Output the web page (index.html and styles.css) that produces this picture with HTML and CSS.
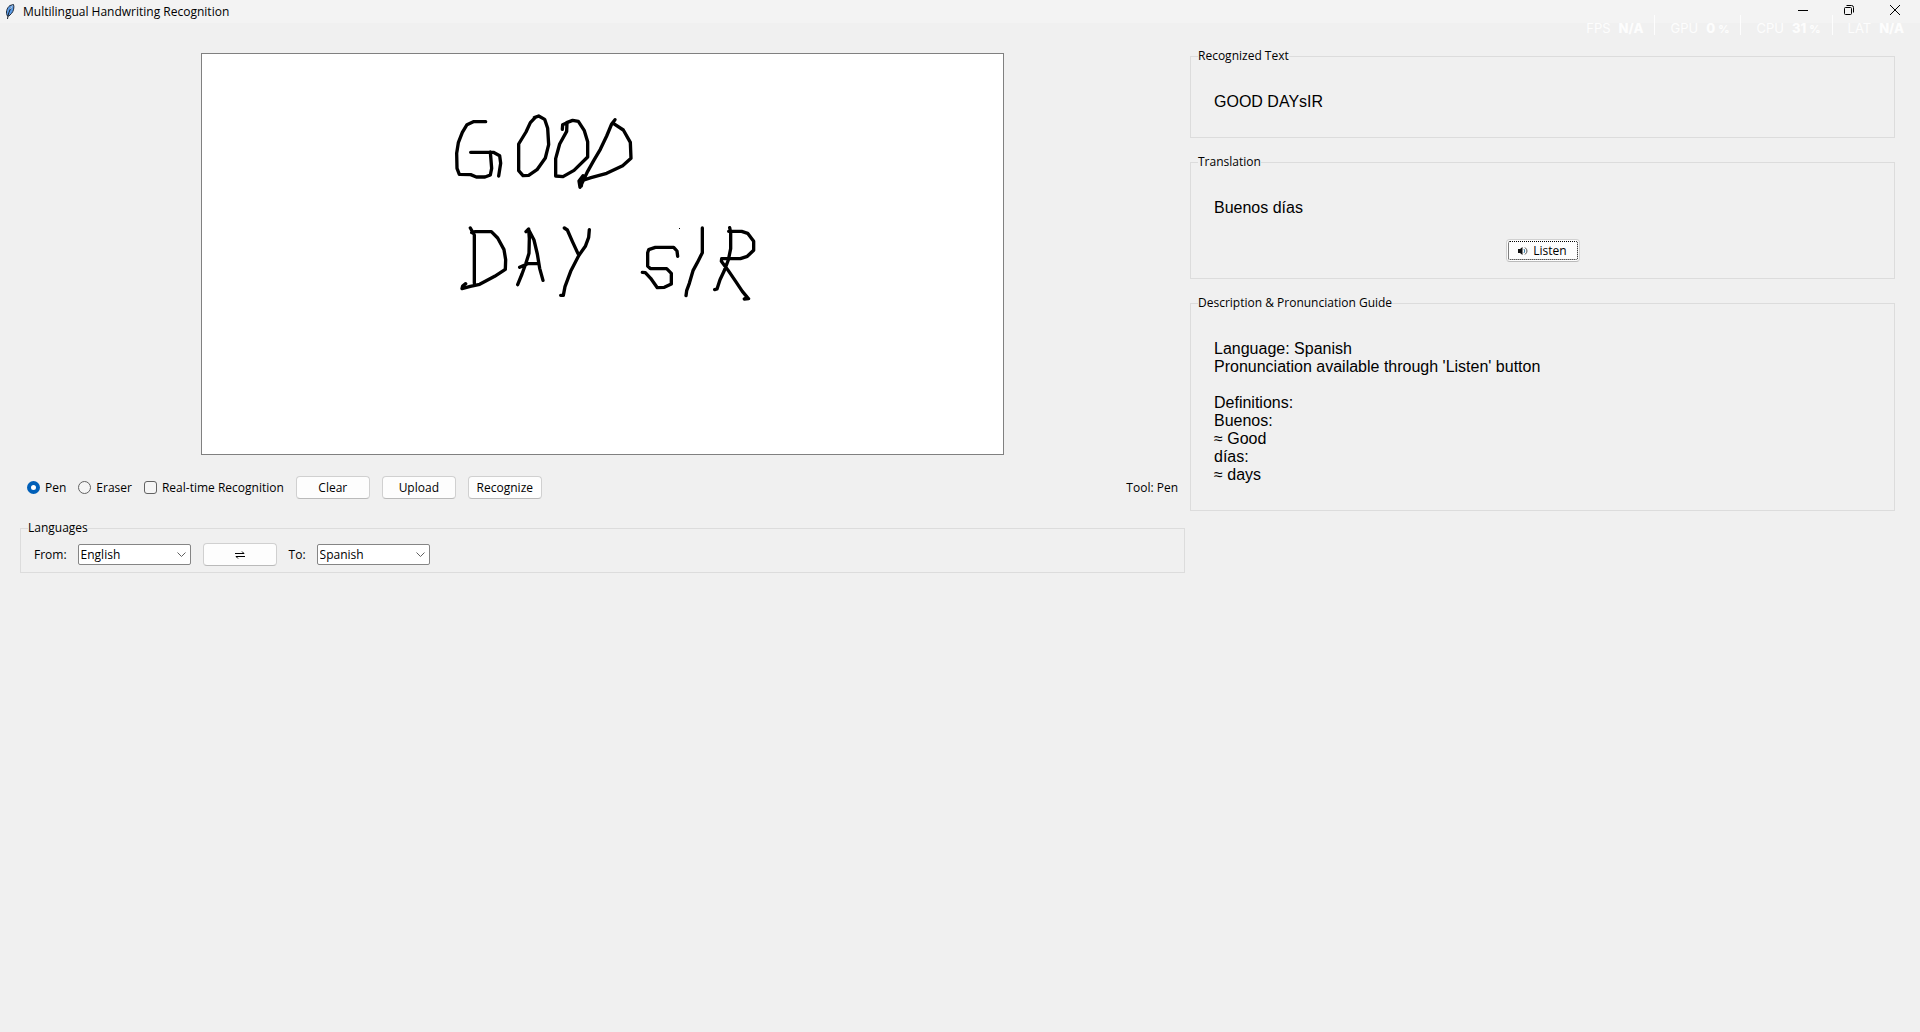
FILE: index.html
```html
<!DOCTYPE html>
<html lang="en">
<head>
<meta charset="utf-8">
<title>Multilingual Handwriting Recognition</title>
<link rel="stylesheet" href="styles.css">
</head>
<body>
<header class="titlebar">
  <svg class="app-icon" width="10" height="16" viewBox="0 0 10 16" aria-hidden="true">
    <path d="M2.500 12C.5 9 1.500 4 5 1.500L8.500.5C9.500 3 8.500 7.500 6.500 9.500L4 12Z" fill="#5b9be6" stroke="#222c3a"/>
    <path d="M7 2.500C4.500 6 3 10 2.500 15" fill="none" stroke="#18202c"/>
    <path d="M7.500 1.500L5.500 5" stroke="#c4defa"/>
  </svg>
  <h1 class="title">Multilingual Handwriting Recognition</h1>
  <div class="window-controls">
    <button type="button" class="window-button" aria-label="Minimize"><svg width="12" height="12" viewBox="0 0 12 12"><path d="M1 6.500H11"/></svg></button>
    <button type="button" class="window-button" aria-label="Restore"><svg width="12" height="12" viewBox="0 0 12 12"><rect x="1.500" y="3.500" width="7" height="7" rx="1"/><path d="M3.500 1.500H8.500Q10.500 1.500 10.500 3.500V8.500"/></svg></button>
    <button type="button" class="window-button" aria-label="Close"><svg width="12" height="12" viewBox="0 0 12 12"><path d="M1 1L11 11M11 1L1 11"/></svg></button>
  </div>
</header>

<div class="stats">
  <span class="stat">FPS <b>N/A</b></span>
  <span class="stat">GPU <b>0<small>%</small></b></span>
  <span class="stat">CPU <b>31<small>%</small></b></span>
  <span class="stat">LAT <b>N/A</b></span>
</div>

<main class="workspace">
  <div class="editor">
    <svg class="canvas" viewBox="0 0 801 400" role="img" aria-label="Drawing canvas">
      <g class="ink" transform="translate(238 46) scale(.33333)">
        <path d="M137 65H100L81 74L67 97L55 128L50 160L51 205L58 223L92 224L109 231H135L151 225L155 205L151 156M92 157H160L179 167L182 190L176 228"/>
        <path d="M286 52L271 68L258 96L236 132V212L249 227L266 226L291 209L316 174L326 134L323 85L314 58L296 48L283 53"/>
        <path d="M367 88L368 74L381 68L380 94L359 132L347 176V228L369 230L402 211L443 171V125L433 92L415 64L398 61L380 68"/>
        <path d="M525 59L515 72L500 108L481 148L461 182L443 214L431 239L420 262L417 243L429 227L424 258M521 71L550 90L571 127L573 175L548 197L500 220L453 233L432 240"/>
      </g>
      <g class="ink" transform="translate(238 156) scale(.33333)">
        <path d="M91 54L103 75V220M95 68L106 65H154L173 84L192 119L197 149L196 178L164 199L119 223L91 229L66 236L68 228L77 221"/>
        <path d="M258 65L266 57L268 85L267 130L257 162L246 192L233 224M266 59L282 90L292 132L299 175L309 211M239 172L263 161H295"/>
        <path d="M373 54L382 60L397 94L414 131M448 59L446 82L436 109L416 137L392 184L375 230L370 256H362"/>
      </g>
      <g class="ink" transform="translate(418 156) scale(.33333)">
        <path d="M173 139L171 123L161 112H106L86 119L83 128V168L91 176H140L154 190V222L133 232L112 233L92 205L76 188L67 187"/>
        <path d="M247 54V128L232 158L219 182L208 220L200 242L198 257"/>
        <path d="M329 53L332 68V116L325 150L312 184L300 209L291 237L284 239M326 64H365L383 70L401 94V121L382 139L361 146H305L304 154L323 179L347 214L367 244L382 262L373 267L386 266"/>
        <rect class="dot" x="177" y="54" width="3" height="3"/>
      </g>
    </svg>

    <div class="toolbar">
      <label class="option"><input type="radio" name="tool" checked>Pen</label>
      <label class="option"><input type="radio" name="tool">Eraser</label>
      <label class="option"><input type="checkbox">Real-time Recognition</label>
      <div class="actions">
        <button type="button" class="button">Clear</button>
        <button type="button" class="button">Upload</button>
        <button type="button" class="button">Recognize</button>
      </div>
      <output class="status">Tool: Pen</output>
    </div>

    <fieldset class="group">
      <legend>Languages</legend>
      <div class="languages">
        <label class="language">From:
          <select class="select"><option>English</option><option>Spanish</option></select>
        </label>
        <button type="button" class="button" aria-label="Swap languages"><svg width="10" height="8" viewBox="0 0 10 8"><path d="M0 2.500H9M7 .5L9 2.500M10 5.500H1M1 5.500L3 7.500" fill="none" stroke="#000"/></svg></button>
        <label class="language">To:
          <select class="select"><option>Spanish</option><option>English</option></select>
        </label>
      </div>
    </fieldset>
  </div>

  <div class="results">
    <fieldset class="group">
      <legend>Recognized Text</legend>
      <p class="result">GOOD DAYsIR</p>
    </fieldset>
    <fieldset class="group">
      <legend>Translation</legend>
      <p class="result">Buenos días</p>
      <div class="listen-row">
        <button type="button" class="button listen"><svg width="10" height="8" viewBox="0 0 10 8"><path d="M0 2H2L4.500 0V8L2 6H0Z" fill="#111"/><path d="M6 2Q7.500 4 6 6" fill="none" stroke="#367ba8"/><path d="M7 .5Q11 4 7 7.500" fill="none" stroke="#555"/></svg>Listen</button>
      </div>
    </fieldset>
    <fieldset class="group">
      <legend>Description &amp; Pronunciation Guide</legend>
      <p class="result">Language: Spanish
Pronunciation available through 'Listen' button

Definitions:
Buenos:
≈ Good
días:
≈ days</p>
    </fieldset>
  </div>
</main>
</body>
</html>
```
FILE: styles.css
```css
* {
  box-sizing: border-box;
}

body {
  margin: 0;
  min-height: 100vh;
  background: #f0f0f0;
  color: #000;
  font: 12px/16px "Open Sans", "Noto Sans", sans-serif;
}

button,
select {
  font: inherit;
  color: inherit;
}

/* Title bar */
.titlebar {
  display: flex;
  align-items: center;
  height: 23px;
  padding: 0 2px 0 5px;
  background: #f3f3f3;
}

.title {
  margin: 0 0 0 8px;
  font-size: 12px;
  font-weight: 400;
}

.window-controls {
  display: flex;
  align-self: flex-start;
  margin-left: auto;
}

.window-button {
  display: grid;
  place-items: center;
  width: 46px;
  height: 20px;
  padding: 0;
  border: 0;
  background: none;
}

.window-button svg {
  fill: none;
  stroke: #000;
}

/* Performance overlay */
.stats {
  position: absolute;
  top: 15px;
  right: 16px;
  display: flex;
  color: #fdfdfd;
  font: 13px/20px Inter, sans-serif;
  pointer-events: none;
}

.stat {
  display: flex;
  gap: 8px;
  height: 20px;
  padding: 3px 11px 0 15px;
  border-left: 1px solid #fdfdfd;
}

.stat:first-child {
  border-left: 0;
}

.stat:last-child {
  padding-right: 0;
}

.stat b {
  font-weight: 800;
}

.stat small {
  margin-left: 3px;
  font-size: 11px;
}

/* Workspace */
.workspace {
  display: grid;
  grid-template-columns: 1165fr 705fr;
  align-items: start;
  gap: 5px;
  padding: 25px 25px 25px 20px;
}

.editor {
  padding-top: 5px;
}

.canvas {
  display: block;
  width: 100%;
  max-width: 803px;
  margin: 0 auto 21px;
  border: 1px solid #808080;
  background: #fff;
}

.ink {
  fill: none;
  stroke: #000;
  stroke-width: 10;
  stroke-linecap: round;
  stroke-linejoin: round;
}

.dot {
  fill: #000;
  stroke: none;
}

.toolbar {
  display: flex;
  align-items: center;
  margin-bottom: 21px;
  padding: 0 7px;
}

.option {
  display: flex;
  align-items: center;
  gap: 5px;
  margin-right: 12px;
}

.option input {
  appearance: none;
  width: 13px;
  height: 13px;
  margin: 0;
  border: 1px solid #626262;
  border-radius: 3px;
  background: #f5f5f5;
}

.option input[type="radio"] {
  border-radius: 50%;
}

.option input[type="radio"]:checked {
  border: 4px solid #005fb8;
  background: #fff;
}

.actions {
  display: flex;
  gap: 12px;
}

.button {
  display: flex;
  align-items: center;
  justify-content: center;
  gap: 5px;
  width: 74px;
  height: 23px;
  padding: 0;
  border: 1px solid #d0d0d0;
  border-bottom-color: #bababa;
  border-radius: 4px;
  background: #fdfdfd;
}

.status {
  margin-left: auto;
}

/* Framed groups */
.group {
  min-width: 0;
  margin: 0;
  padding: 0 23px;
  border: 1px solid #dcdcdc;
}

.group legend {
  margin-left: -16px;
  padding: 0;
}

.editor .group {
  padding: 7px 13px 6px;
}

.editor .group legend {
  margin-left: -6px;
}

.languages {
  display: flex;
  align-items: center;
  gap: 12px;
}

.language {
  display: flex;
  align-items: center;
  gap: 11px;
}

.select {
  appearance: none;
  width: 113px;
  height: 21px;
  padding: 0 20px 0 2px;
  border: 1px solid #858585;
  border-radius: 2px;
  background: #fff url("data:image/svg+xml,%3Csvg xmlns='http://www.w3.org/2000/svg' width='9' height='6'%3E%3Cpath d='M.5.5l4 4 4-4' fill='none' stroke='%23606060'/%3E%3C/svg%3E") no-repeat right 4px center;
}

.results {
  display: grid;
  gap: 16px;
}

.result {
  margin: 29px 0 26px;
  font: 16px/18px "Liberation Sans", Arial, sans-serif;
  white-space: pre-wrap;
}

.listen-row {
  display: flex;
  justify-content: center;
  margin: -4px 0 16px;
}

.listen {
  outline: 1px dotted #000;
  outline-offset: -3px;
}
```
